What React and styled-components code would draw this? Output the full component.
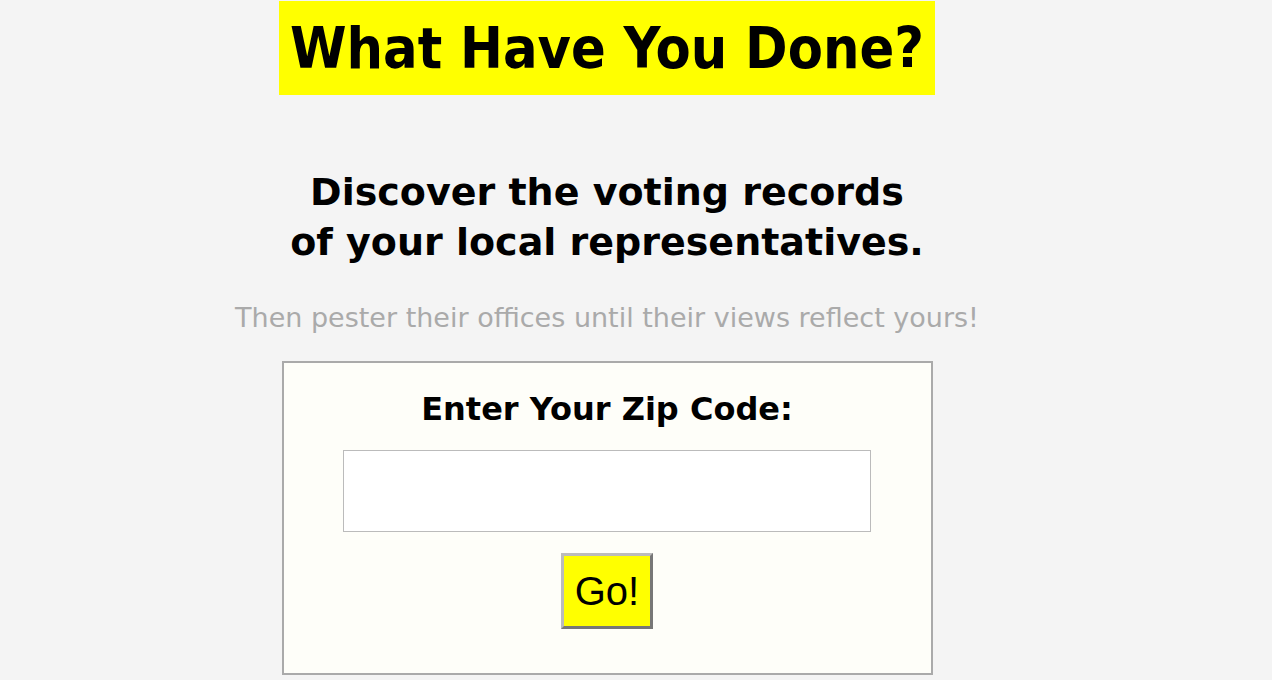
import React from "react";
import styled, { createGlobalStyle } from "styled-components";

const GlobalStyle = createGlobalStyle`
  html, body {
    margin: 0;
    padding: 0;
    background: #f4f4f4;
  }
  body {
    font-family: "DejaVu Sans", "Liberation Sans", sans-serif;
  }
`;

const Page = styled.div`
  width: 1214px;
  display: flex;
  flex-direction: column;
  align-items: center;
  padding-top: 1px;
`;

const Banner = styled.h1`
  margin: 0;
  width: 656px;
  height: 94px;
  background: #ffff00;
  color: #000;
  display: flex;
  align-items: center;
  justify-content: center;
  white-space: nowrap;
  font-family: "DejaVu Sans Condensed", "DejaVu Sans", sans-serif;
  font-stretch: condensed;
  font-size: 57px;
  font-weight: bold;
`;

const Tagline = styled.h2`
  margin: 72px 0 0;
  text-align: center;
  font-size: 38px;
  line-height: 50px;
  font-weight: bold;
  color: #000;
`;

const Subtext = styled.p`
  margin: 34px 0 0;
  font-size: 27px;
  line-height: 34px;
  color: #aaaaaa;
`;

const ZipBox = styled.form`
  margin-top: 26px;
  width: 647px;
  height: 310px;
  box-sizing: content-box;
  border: 2px solid #aaaaaa;
  background: #fefef9;
  display: flex;
  flex-direction: column;
  align-items: center;
`;

const ZipLabel = styled.label`
  margin-top: 26px;
  font-size: 32px;
  line-height: 40px;
  font-weight: bold;
  color: #000;
`;

const ZipInput = styled.input`
  margin-top: 21px;
  width: 528px;
  height: 82px;
  box-sizing: border-box;
  border: 1px solid #bbbbbb;
  background: #fff;
  font-size: 30px;
  outline: none;
`;

const GoButton = styled.button`
  margin-top: 21px;
  width: 92px;
  height: 76px;
  box-sizing: border-box;
  background: #ffff00;
  border-style: solid;
  border-width: 3px;
  border-color: #bbbbbb #777777 #777777 #bbbbbb;
  font-family: "Liberation Sans", Arial, sans-serif;
  font-size: 40px;
  color: #000;
  padding: 0;
  cursor: pointer;
`;

export default function App() {
  return (
    <>
      <GlobalStyle />
      <Page>
        <Banner>What Have You Done?</Banner>
        <Tagline>
          Discover the voting records
          <br />
          of your local representatives.
        </Tagline>
        <Subtext>Then pester their offices until their views reflect yours!</Subtext>
        <ZipBox onSubmit={(e) => e.preventDefault()}>
          <ZipLabel htmlFor="zip">Enter Your Zip Code:</ZipLabel>
          <ZipInput id="zip" type="text" />
          <GoButton type="submit">Go!</GoButton>
        </ZipBox>
      </Page>
    </>
  );
}
